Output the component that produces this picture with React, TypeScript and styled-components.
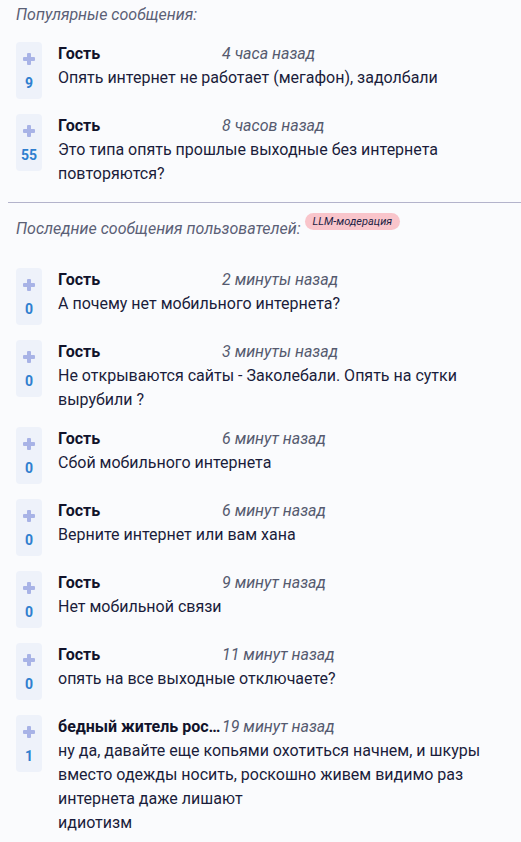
import React from "react";
import styled, { createGlobalStyle } from "styled-components";

const Global = createGlobalStyle`
  html, body { margin: 0; padding: 0; background: #fafbfd; }
  body { font-family: Roboto, "Noto Sans", "Liberation Sans", sans-serif; }
`;

const Page = styled.div`
  padding: 3px 0 0 8px;
  background: #fafbfd;
  min-height: 842px;
  box-sizing: border-box;
`;

const Section = styled.section`
  padding: 0 8px;
`;

const Header = styled.div<{ $second?: boolean }>`
  display: flex;
  align-items: flex-start;
  gap: 4px;
  font-size: 16px;
  line-height: 24px;
  font-style: italic;
  color: #5b6076;
  margin-top: ${(p) => (p.$second ? "14px" : "0")};
  margin-bottom: ${(p) => (p.$second ? "27px" : "15px")};
`;

const Badge = styled.span`
  display: inline-block;
  margin-top: -4px;
  padding: 0 8px;
  height: 17px;
  line-height: 17px;
  border-radius: 9px;
  background: #f9c5cb;
  color: #1d1f45;
  font-size: 11px;
  font-style: italic;
`;

const List = styled.div`
  display: flex;
  flex-direction: column;
  gap: 15px;
`;

const Row = styled.div`
  display: flex;
  gap: 16px;
  align-items: flex-start;
`;

const Vote = styled.div`
  flex: none;
  width: 26px;
  height: 57px;
  border-radius: 4px;
  background: #eef2fa;
  display: flex;
  flex-direction: column;
  align-items: center;
  padding-top: 11px;
  box-sizing: border-box;
`;

const Plus = styled.span`
  position: relative;
  width: 12px;
  height: 12px;
  &::before,
  &::after {
    content: "";
    position: absolute;
    background: #a8b3e6;
    border-radius: 1px;
  }
  &::before {
    left: 0;
    top: 4.25px;
    width: 12px;
    height: 3.5px;
  }
  &::after {
    left: 4.25px;
    top: 0;
    width: 3.5px;
    height: 12px;
  }
`;

const Score = styled.span`
  margin-top: 10px;
  font-size: 14px;
  font-weight: 700;
  line-height: 16px;
  color: #2f7fcf;
`;

const Body = styled.div`
  flex: 1;
  min-width: 0;
  font-size: 16px;
  line-height: 24px;
  color: #1a1d3b;
`;

const Meta = styled.div`
  display: flex;
`;

const Name = styled.span`
  flex: none;
  width: 164px;
  font-weight: 700;
  color: #11132b;
  white-space: nowrap;
`;

const Time = styled.span`
  font-style: italic;
  color: #555a6f;
`;

const Text = styled.div`
  white-space: pre-line;
`;

const Divider = styled.hr`
  margin: 16px 0 0 0;
  border: none;
  height: 1px;
  background: #b3b3cb;
`;

type Msg = { name: string; time: string; score: number; text: string };

const popular: Msg[] = [
  { name: "Гость", time: "4 часа назад", score: 9, text: "Опять интернет не работает (мегафон), задолбали" },
  { name: "Гость", time: "8 часов назад", score: 55, text: "Это типа опять прошлые выходные без интернета повторяются?" },
];

const latest: Msg[] = [
  { name: "Гость", time: "2 минуты назад", score: 0, text: "А почему нет мобильного интернета?" },
  { name: "Гость", time: "3 минуты назад", score: 0, text: "Не открываются сайты - Заколебали. Опять на сутки вырубили ?" },
  { name: "Гость", time: "6 минут назад", score: 0, text: "Сбой мобильного интернета" },
  { name: "Гость", time: "6 минут назад", score: 0, text: "Верните интернет или вам хана" },
  { name: "Гость", time: "9 минут назад", score: 0, text: "Нет мобильной связи" },
  { name: "Гость", time: "11 минут назад", score: 0, text: "опять на все выходные отключаете?" },
  {
    name: "бедный житель рос…",
    time: "19 минут назад",
    score: 1,
    text: "ну да, давайте еще копьями охотиться начнем, и шкуры вместо одежды носить, роскошно живем видимо раз интернета даже лишают\nидиотизм",
  },
];

const Message = ({ m }: { m: Msg }) => (
  <Row>
    <Vote>
      <Plus />
      <Score>{m.score}</Score>
    </Vote>
    <Body>
      <Meta>
        <Name>{m.name}</Name>
        <Time>{m.time}</Time>
      </Meta>
      <Text>{m.text}</Text>
    </Body>
  </Row>
);

export default function App() {
  return (
    <>
      <Global />
      <Page>
        <Section>
          <Header>Популярные сообщения:</Header>
          <List>
            {popular.map((m, i) => (
              <Message key={i} m={m} />
            ))}
          </List>
        </Section>
        <Divider />
        <Section>
          <Header $second>
            <span>Последние сообщения пользователей:</span>
            <Badge>LLM-модерация</Badge>
          </Header>
          <List>
            {latest.map((m, i) => (
              <Message key={i} m={m} />
            ))}
          </List>
        </Section>
      </Page>
    </>
  );
}
